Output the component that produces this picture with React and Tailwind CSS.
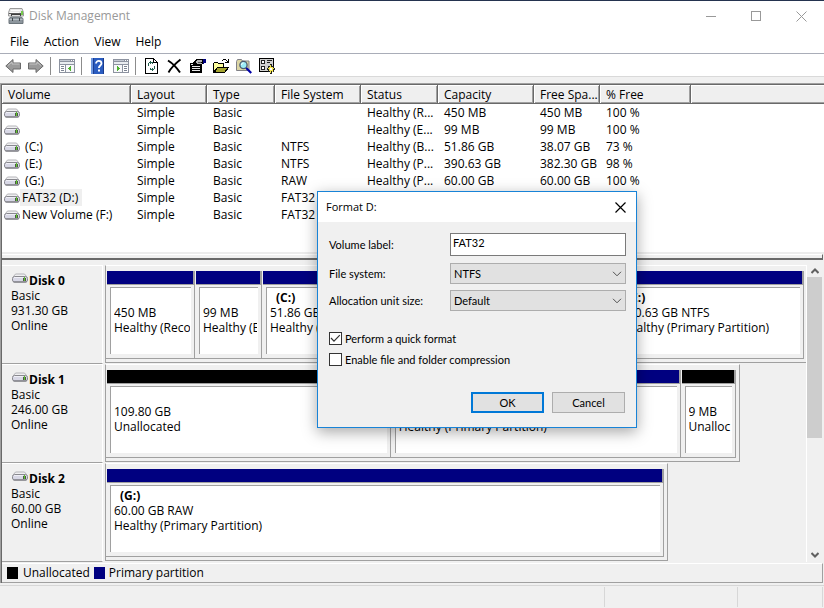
import React, { useState } from "react";

const volumes = [
  { name: "", fs: "", status: "Healthy (R...", capacity: "450 MB", free: "450 MB", pct: "100 %" },
  { name: "", fs: "", status: "Healthy (E...", capacity: "99 MB", free: "99 MB", pct: "100 %" },
  { name: "(C:)", fs: "NTFS", status: "Healthy (B...", capacity: "51.86 GB", free: "38.07 GB", pct: "73 %" },
  { name: "(E:)", fs: "NTFS", status: "Healthy (P...", capacity: "390.63 GB", free: "382.30 GB", pct: "98 %" },
  { name: "(G:)", fs: "RAW", status: "Healthy (P...", capacity: "60.00 GB", free: "60.00 GB", pct: "100 %" },
  { name: "FAT32 (D:)", fs: "FAT32", status: "", capacity: "", free: "", pct: "", selected: true },
  { name: "New Volume (F:)", fs: "FAT32", status: "", capacity: "", free: "", pct: "" },
];

const columns = [
  { label: "Volume", width: "w-[129px]" },
  { label: "Layout", width: "w-[76px]" },
  { label: "Type", width: "w-[68px]" },
  { label: "File System", width: "w-[86px]" },
  { label: "Status", width: "w-[77px]" },
  { label: "Capacity", width: "w-[96px]" },
  { label: "Free Spa...", width: "w-[66px]" },
  { label: "% Free", width: "w-[91px]" },
];

const disks = [
  {
    name: "Disk 0",
    size: "931.30 GB",
    grow: "grow",
    rest: "",
    parts: [
      { size: "450 MB", status: "Healthy (Reco", grow: "grow-[89]", primary: true },
      { size: "99 MB", status: "Healthy (E", grow: "grow-[67]", primary: true },
      { drive: "(C:)", size: "51.86 GB", status: "Healthy (", grow: "grow-[351]", primary: true },
      { drive: "(E:)", size: "390.63 GB NTFS", status: "Healthy (Primary Partition)", grow: "grow-[191]", primary: true },
    ],
  },
  {
    name: "Disk 1",
    size: "246.00 GB",
    grow: "grow-[635]",
    rest: "grow-[66]",
    parts: [
      { size: "109.80 GB", status: "Unallocated", grow: "grow-[285]" },
      { drive: "", size: "", status: "Healthy (Primary Partition)", grow: "grow-[290]", primary: true },
      { size: "9 MB", status: "Unalloc", grow: "grow-[56]" },
    ],
  },
  {
    name: "Disk 2",
    size: "60.00 GB",
    grow: "grow-[562]",
    rest: "grow-[139]",
    parts: [
      { drive: "(G:)", size: "60.00 GB RAW", status: "Healthy (Primary Partition)", grow: "grow", primary: true },
    ],
  },
];

const DriveIcon = () => (
  <svg width="16" height="10" viewBox="0 0 16 10" className="shrink-0">
    <path d="M3.500 1h9l2.500 3H1z" fill="#f0f0f2" />
    <path d="M1.500 3.500l2-2.500h9l2 2.500" fill="none" stroke="#b4b4b8" />
    <rect x="0.500" y="3.500" width="15" height="5.500" rx="2" fill="#d8d8e6" stroke="#88888e" />
    <path d="M2 4.500h9" stroke="#efeff6" />
    <path d="M1.500 9h13" stroke="#737378" />
    <rect x="11" y="5" width="3" height="3" fill="#4b5a45" />
    <rect x="12" y="4" width="1" height="4" fill="#5fc42c" />
  </svg>
);

const AppIcon = () => (
  <svg width="16" height="16" viewBox="0 0 16 16">
    <path d="M2 0.500h12l1.500 4v3.500h-15V4.500z" fill="#e6e6e6" stroke="#9a9a9a" />
    <path d="M3 2.500h9M2 4.500h9" stroke="#fafafa" />
    <rect x="1" y="5" width="14" height="1" fill="#5a5a5a" />
    <rect x="3" y="6" width="10" height="2" fill="#3f3f3f" />
    <rect x="4" y="7" width="8" height="1" fill="#dedede" />
    <rect x="13" y="3" width="2" height="4" fill="#76c84c" />
    <path d="M1 10.500l2-1.500h10l2 1.500v5H1z" fill="#8d969d" stroke="#6c757b" />
    <path d="M1.500 11.500h13" stroke="#b7bfc5" />
    <path d="M4.500 10v3M11.500 10v3" stroke="#41474c" />
  </svg>
);

const ArrowIcon = ({ flip }) => (
  <svg width="16" height="16" viewBox="0 0 16 16" className={flip ? "-scale-x-100" : ""}>
    <path d="M0.800 8L8 1.500V5h7.500v6H8v3.500z" fill="#9a9a9a" stroke="#6a6a6a" strokeLinejoin="round" />
    <path d="M3 7.500L7 4v2h7.500" fill="none" stroke="#c4c4c4" />
  </svg>
);

const PaneIcon = ({ flip }) => (
  <svg width="16" height="16" viewBox="0 0 16 16" shapeRendering="crispEdges">
    <rect x="0" y="1" width="16" height="14" fill="#8d93a0" />
    <rect x="1" y="2" width="10" height="1" fill="#c3c8d2" />
    <rect x="12" y="2" width="1" height="1" fill="#fff" />
    <rect x="14" y="2" width="1" height="1" fill="#fff" />
    <rect x="1" y="4" width="14" height="2" fill="#e9ecf0" />
    <g transform={flip ? "translate(16 0) scale(-1 1)" : undefined}>
      <rect x="1" y="7" width="5" height="7" fill="#fff" />
      <rect x="7" y="7" width="8" height="7" fill="#f7f8fa" />
      <path d="M2 8h3v1H2zM2 10h3v1H2zM2 12h3v1H2z" fill="#7d8493" />
      <path d="M12 8v5h-1v-1h-1v-1H9v-1h1V9h1V8z" fill="#4fb32f" />
    </g>
  </svg>
);

const HelpIcon = () => (
  <svg width="16" height="16" viewBox="0 0 16 16">
    <rect x="1" y="0" width="13" height="16" fill="#2a5cc0" />
    <rect x="1" y="0" width="2" height="16" fill="#6f98e0" />
    <rect x="3" y="0" width="1" height="16" fill="#1c3f93" />
    <rect x="13" y="0" width="1" height="16" fill="#1b3c8c" />
    <path d="M6 5.500c0-3.400 5.500-3.400 5.500 0 0 2-2.600 2-2.600 4.500" fill="none" stroke="#fff" strokeWidth="1.800" />
    <rect x="8" y="11.500" width="2" height="2" fill="#fff" />
  </svg>
);

const RefreshIcon = () => (
  <svg width="16" height="16" viewBox="0 0 16 16" shapeRendering="crispEdges">
    <path d="M1.500 0.500h8l4 4v11h-12z" fill="#fff" stroke="#000" />
    <path d="M9.500 0.500v4h4" fill="none" stroke="#000" />
    <path d="M5 4h4v1H5zM6 3h1v3H6zM4 5h1v3H4zM8 5h1v1H8zM10 8h1v3h-1zM6 11h4v1H6zM8 10h1v3H8zM6 10h1v1H6z" fill="#23604f" />
  </svg>
);

const DeleteIcon = () => (
  <svg width="16" height="16" viewBox="0 0 16 16">
    <path d="M1 2.500C5 5 10 10 13 14.500" fill="none" stroke="#000" strokeWidth="2" />
    <path d="M13.500 1.500C9 5 4 10 1.500 14.500" fill="none" stroke="#000" strokeWidth="1.800" />
  </svg>
);

const PropertiesIcon = () => (
  <svg width="16" height="16" viewBox="0 0 16 16" shapeRendering="crispEdges">
    <path d="M0 5h12v10H0z" fill="#000" />
    <path d="M1 6h2v1H1zM2 8h8v1H2zM2 10h8v1H2zM2 12h8v1H2z" fill="#e8e8e8" />
    <path d="M3 4l4-3h5l1 1v4l-2 1H9L7 6H4z" fill="#000" />
    <path d="M5 4l3-2h4v2H8v1h4v1H7z" fill="#b5b5b5" />
    <path d="M8 4h3v1H8z" fill="#555" />
    <path d="M13 1h3v4h-2v1h-1z" fill="#000080" />
  </svg>
);

const FolderIcon = () => (
  <svg width="16" height="16" viewBox="0 0 16 16" shapeRendering="crispEdges">
    <path d="M0.500 14.500v-9l1-1h3l1 1h5v4h-6z" fill="#ffff9c" stroke="#000" />
    <path d="M1.500 14.500l3-5h11l-4 5z" fill="#a5a531" stroke="#000" />
    <path d="M9 2h1v1H9zM10 1h3v1h-3zM13 2h1v1h-1zM15 1h1v4h-4V4h2V3h1z" fill="#000" />
  </svg>
);

const SearchIcon = () => (
  <svg width="16" height="16" viewBox="0 0 16 16">
    <path d="M0.500 3.500l1-2h4l1 1.500h6.500v9.500H0.500z" fill="#dcd6a4" stroke="#808087" />
    <circle cx="7.500" cy="7" r="3.600" fill="#9becf7" stroke="#4a5a70" strokeWidth="1.300" />
    <path d="M5.500 7c0-1.500 1-2 2-2" fill="none" stroke="#fff" />
    <path d="M10.200 10l5 5" stroke="#0000a8" strokeWidth="2.200" />
  </svg>
);

const SettingsIcon = () => (
  <svg width="16" height="16" viewBox="0 0 16 16" shapeRendering="crispEdges">
    <rect x="0.500" y="0.500" width="14" height="13" fill="#d0d0d0" stroke="#000" />
    <path d="M2 2h4v4H2zM2 8h4v4H2z" fill="#222" />
    <path d="M3 3h2v2H3zM3 9h2v2H3z" fill="#fff" />
    <path d="M8 2h5v1H8zM8 4h3v1H8z" fill="#222" />
    <path d="M11 6h2v2h2v2h1v2h-1v2h-2v2h-2v-2H9v-2H8v-2h1V8h2z" fill="#222" />
    <path d="M10 9h4v4h-4zM11 7h1v8h-1zM9 10h6v1H9zM13 13h1v1h-1z" fill="#f5e64e" />
    <rect x="11" y="10" width="2" height="2" fill="#fff" />
  </svg>
);

const ToolButton = ({ label, children }) => (
  <button type="button" aria-label={label} className="w-4 h-4">
    {children}
  </button>
);

const Separator = () => <div className="w-px h-[18px] ml-[6px] mr-2 bg-[#8c8c8c]" />;

const TitleBar = () => (
  <header className="flex items-center h-[31px] pl-2 border-t border-[#24334f] text-[#999999]">
    <AppIcon />
    <h1 className="grow pl-[5px]">Disk Management</h1>
    <button type="button" aria-label="Minimize" className="flex justify-center w-[45px]">
      <svg width="10" height="10" viewBox="0 0 10 10">
        <path d="M0 5.500h10" stroke="#999" />
      </svg>
    </button>
    <button type="button" aria-label="Maximize" className="flex justify-center w-[45px]">
      <svg width="10" height="10" viewBox="0 0 10 10">
        <rect x="0.500" y="0.500" width="9" height="9" fill="none" stroke="#999" />
      </svg>
    </button>
    <button type="button" aria-label="Close" className="flex justify-center w-[46px]">
      <svg width="11" height="11" viewBox="0 0 11 11">
        <path d="M0.500 0.500l10 10M10.500 0.500l-10 10" stroke="#999" />
      </svg>
    </button>
  </header>
);

const Toolbar = () => (
  <div className="flex items-center h-[23px] pt-[2px] pl-[5px] border-b border-[#d9d9d9]">
    <div className="flex gap-[7px]">
      <ToolButton label="Back"><ArrowIcon /></ToolButton>
      <ToolButton label="Forward"><ArrowIcon flip /></ToolButton>
    </div>
    <Separator />
    <ToolButton label="Show tree"><PaneIcon /></ToolButton>
    <Separator />
    <div className="flex gap-[7px]">
      <ToolButton label="Help"><HelpIcon /></ToolButton>
      <ToolButton label="Show action pane"><PaneIcon flip /></ToolButton>
    </div>
    <Separator />
    <div className="flex gap-[7px]">
      <ToolButton label="Refresh"><RefreshIcon /></ToolButton>
      <ToolButton label="Delete"><DeleteIcon /></ToolButton>
      <ToolButton label="Properties"><PropertiesIcon /></ToolButton>
      <ToolButton label="Open"><FolderIcon /></ToolButton>
      <ToolButton label="Explore"><SearchIcon /></ToolButton>
      <ToolButton label="Settings"><SettingsIcon /></ToolButton>
    </div>
  </div>
);

const VolumeTable = () => (
  <div className="h-[169px] bg-white border-b-2 border-[#ececec]">
    <table className="w-full table-fixed border-separate border-spacing-0 text-left">
      <thead>
        <tr>
          {columns.map((col) => (
            <th
              key={col.label}
              className={`${col.width} h-[19px] p-0 pl-[6px] leading-[17px] font-normal bg-[#efefef] border-b border-r border-[#696969] shadow-[inset_1px_1px_0_#fff,inset_-1px_-1px_0_#a0a0a0] whitespace-nowrap overflow-hidden`}
            >
              {col.label}
            </th>
          ))}
          <td className="bg-[#efefef] border-b border-[#696969] shadow-[inset_1px_1px_0_#fff,inset_0_-1px_0_#a0a0a0]" />
        </tr>
      </thead>
      <tbody>
        {volumes.map((v, i) => (
          <tr key={i} className="h-[17px] leading-[17px] whitespace-nowrap">
            <td className="p-0 pl-[2px]">
              <div className="flex items-center">
                <DriveIcon />
                <span className={`pl-[2px] pr-1 whitespace-pre ${v.selected ? "bg-[#efefef]" : ""}`}>
                  {v.name.startsWith("(") ? ` ${v.name}` : v.name}
                </span>
              </div>
            </td>
            <td className="p-0 pl-[6px]">Simple</td>
            <td className="p-0 pl-[6px]">Basic</td>
            <td className="p-0 pl-[6px]">{v.fs}</td>
            <td className="p-0 pl-[6px]">{v.status}</td>
            <td className="p-0 pl-[6px]">{v.capacity}</td>
            <td className="p-0 pl-[6px]">{v.free}</td>
            <td className="p-0 pl-[6px]">{v.pct}</td>
            <td />
          </tr>
        ))}
      </tbody>
    </table>
  </div>
);

const Partition = ({ part }) => (
  <div className={`flex flex-col basis-0 min-w-0 ${part.grow}`}>
    <div
      className={`h-[14px] ml-px border-r-2 border-b border-[#a0a0a0] ${part.primary ? "bg-[#000080]" : "bg-black"}`}
    />
    <div className="grow flex pt-[2px] pb-1 pl-1 pr-[3px] border-r border-b border-[#a0a0a0]">
      <div className="grow min-w-0 pt-[2px] pl-[3px] pr-px bg-white border-t border-l border-[#a0a0a0]">
        <div className="overflow-hidden whitespace-nowrap leading-[15px]">
          <div className="h-[15px] pl-[6px] font-bold">{part.drive}</div>
          <div className="h-[15px]">{part.size}</div>
          <div className="h-[15px]">{part.status}</div>
        </div>
      </div>
    </div>
  </div>
);

const DiskRow = ({ disk }) => (
  <div className="flex h-[99px]">
    <div className="w-[101px] shrink-0 pl-[9px] pt-[7px] leading-[15px] border-t border-r border-t-white border-r-white border-b border-b-[#a0a0a0]">
      <div className="flex items-start pl-px font-bold">
        <DriveIcon />
        <span className="pl-px">{disk.name}</span>
      </div>
      <div>Basic</div>
      <div>{disk.size}</div>
      <div>Online</div>
    </div>
    <div className="w-[2px] shrink-0" />
    <div
      className={`flex basis-0 min-w-0 h-[98px] pt-[5px] pb-[3px] border-t border-t-white border-l border-b border-[#a0a0a0] ${disk.grow} ${disk.rest ? "border-r pr-[3px]" : "pr-[2px]"}`}
    >
      {disk.parts.map((part, i) => (
        <Partition key={i} part={part} />
      ))}
    </div>
    {disk.rest && <div className={`basis-0 ${disk.rest}`} />}
  </div>
);

const ScrollBar = () => (
  <div className="flex flex-col w-[18px] pr-px shrink-0 border-l border-white">
    <button type="button" aria-label="Scroll up" className="flex items-center justify-center h-[12px]">
      <svg width="8" height="6" viewBox="0 0 8 6">
        <path d="M0.500 5L4 1.500 7.500 5" fill="none" stroke="#606060" strokeWidth="2" />
      </svg>
    </button>
    <div className="h-[161px] mr-px bg-[#cdcdcd]" />
    <div className="grow" />
    <button type="button" aria-label="Scroll down" className="flex items-center justify-center h-[15px]">
      <svg width="8" height="6" viewBox="0 0 8 6">
        <path d="M0.500 1L4 4.500 7.500 1" fill="none" stroke="#606060" strokeWidth="2" />
      </svg>
    </button>
  </div>
);

const Legend = () => (
  <div className="flex items-center h-5 pl-[5px] mr-px border-t border-t-white border-b border-r border-[#a0a0a0]">
    <span className="w-[11px] h-[12px] mr-[5px] bg-black" />
    Unallocated
    <span className="w-[11px] h-[12px] mx-1 bg-[#000080]" />
    Primary partition
  </div>
);

const SelectBox = ({ id, options }) => (
  <div className="relative flex">
    <select
      id={id}
      className="w-full h-[21px] pl-[3px] pr-5 appearance-none border border-[#adadad] bg-[#e1e1e1] leading-[19px] outline-none"
    >
      {options.map((o) => (
        <option key={o}>{o}</option>
      ))}
    </select>
    <svg width="10" height="6" viewBox="0 0 10 6" className="absolute right-1 top-2 pointer-events-none">
      <path d="M1 0.800l4 4 4-4" fill="none" stroke="#505050" />
    </svg>
  </div>
);

const CheckBox = ({ id, label, checked, onChange }) => (
  <div className="flex items-center h-[21px]">
    <span className="relative flex">
      <input
        id={id}
        type="checkbox"
        checked={checked}
        onChange={onChange}
        className="w-[13px] h-[13px] appearance-none border border-[#333333] bg-white"
      />
      {checked && (
        <svg width="13" height="13" viewBox="0 0 13 13" className="absolute inset-0 pointer-events-none">
          <path d="M2 6l3 3.200 5.800-6" fill="none" stroke="#333" strokeWidth="1.200" />
        </svg>
      )}
    </span>
    <label htmlFor={id} className="pl-[3px]">{label}</label>
  </div>
);

const FormatDialog = () => {
  const [label, setLabel] = useState("FAT32");
  const [quick, setQuick] = useState(true);
  const [compress, setCompress] = useState(false);

  return (
    <div
      role="dialog"
      aria-label="Format D:"
      className="absolute left-[317px] top-[191px] w-80 bg-[#f0f0f0] border border-[#1883d7] shadow-[0_4px_14px_rgba(0,0,0,0.35)] font-['Lato',sans-serif] text-[11px]"
    >
      <div className="flex items-center justify-between h-[30px] pl-2 pr-[10px] bg-white font-['Open_Sans','Noto_Sans',sans-serif]">
        <h2>Format D:</h2>
        <button type="button" aria-label="Close">
          <svg width="11" height="11" viewBox="0 0 11 11">
            <path d="M0.500 0.500l10 10M10.500 0.500l-10 10" stroke="#000" strokeWidth="1.200" />
          </svg>
        </button>
      </div>
      <form className="pt-[11px] pl-[11px] pr-[10px] pb-[14px]" onSubmit={(e) => e.preventDefault()}>
        <div className="grid grid-cols-[121px_1fr] gap-y-[6px] items-center">
          <label htmlFor="volume-label">Volume label:</label>
          <input
            id="volume-label"
            type="text"
            value={label}
            onChange={(e) => setLabel(e.target.value)}
            className="w-full h-[23px] pl-[2px] pb-1 mb-px border border-[#7a7a7a] bg-white outline-none"
          />
          <label htmlFor="file-system">File system:</label>
          <SelectBox id="file-system" options={["NTFS", "FAT32", "exFAT"]} />
          <label htmlFor="unit-size">Allocation unit size:</label>
          <SelectBox id="unit-size" options={["Default", "4096", "8192"]} />
        </div>
        <div className="pt-[17px]">
          <CheckBox id="quick" label="Perform a quick format" checked={quick} onChange={() => setQuick(!quick)} />
          <CheckBox
            id="compress"
            label="Enable file and folder compression"
            checked={compress}
            onChange={() => setCompress(!compress)}
          />
        </div>
        <div className="flex justify-end gap-2 pt-[22px] pr-px">
          <button type="submit" className="w-[73px] h-[21px] border-2 border-[#0078d7] bg-[#e1e1e1]">OK</button>
          <button type="button" className="w-[73px] h-[21px] border border-[#adadad] bg-[#e1e1e1]">Cancel</button>
        </div>
      </form>
    </div>
  );
};

const App = () => (
  <div className="relative min-h-screen flex flex-col bg-[#f0f0f0] text-black text-[12px] leading-4 font-['Open_Sans','Noto_Sans',sans-serif]">
    <div className="bg-white">
      <TitleBar />
      <nav className="flex items-center gap-[15px] h-[23px] pl-[10px] border-b border-[#a9adb8]">
        <button type="button">File</button>
        <button type="button">Action</button>
        <button type="button">View</button>
        <button type="button">Help</button>
      </nav>
      <Toolbar />
    </div>

    <main className="mt-[6px] border-t border-l border-[#a0a0a0]">
      <div className="border-t border-l border-[#696969]">
        <VolumeTable />
        <div className="h-[6px] mr-px border-t border-t-white border-b-2 border-b-[#696969] border-r border-r-[#696969]" />
        <div className="flex pt-[5px] pb-px">
          <div className="grow min-w-0">
            {disks.map((disk) => (
              <DiskRow key={disk.name} disk={disk} />
            ))}
          </div>
          <ScrollBar />
        </div>
        <Legend />
      </div>
    </main>

    <footer className="grow flex mt-[2px] py-px border-t border-[#d7d7d7]">
      <div className="grow border-r border-[#d7d7d7]" />
      <div className="w-[133px] border-r border-[#d7d7d7]" />
      <div className="w-[85px] mr-px border-r border-[#d7d7d7]" />
    </footer>

    <FormatDialog />
  </div>
);

export default App;
